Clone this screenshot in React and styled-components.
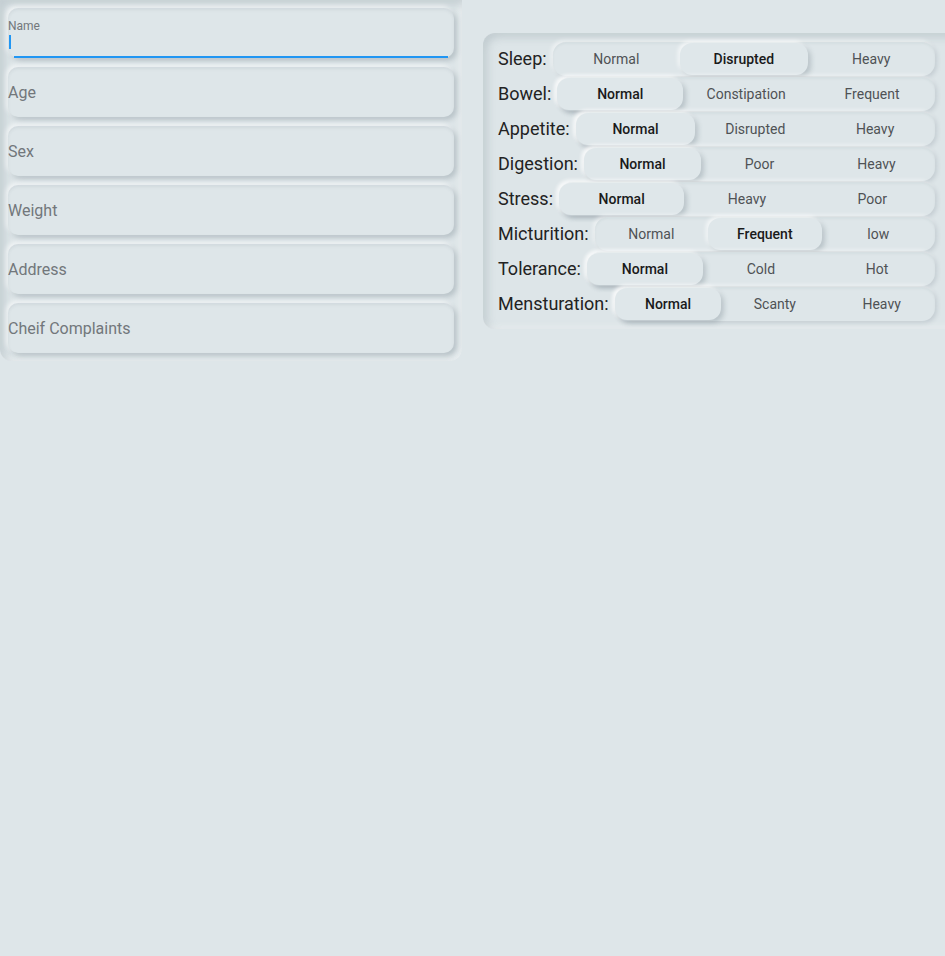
import React from "react";
import styled, { createGlobalStyle } from "styled-components";

const Global = createGlobalStyle`
  html, body { margin: 0; padding: 0; background: #dee6e9; overflow: hidden; }
  body { font-family: Roboto, "Liberation Sans", Arial, sans-serif; }
  * { box-sizing: border-box; }
`;

const Page = styled.div`
  display: flex;
  align-items: flex-start;
  gap: 21px;
  width: 945px;
  height: 956px;
  background: #dee6e9;
`;

const LeftPanel = styled.div`
  flex: 0 0 462px;
  display: flex;
  flex-direction: column;
  gap: 9px;
  padding: 8px;
  border-radius: 0 0 12px 12px;
  background: #dde5e8;
  box-shadow: inset 4px 4px 8px rgba(120, 135, 145, 0.28),
    inset -2px -2px 6px rgba(255, 255, 255, 0.5);
`;

const Field = styled.div`
  position: relative;
  height: 50px;
  border-radius: 10px;
  background: #dee6e9;
  display: flex;
  flex-direction: column;
  justify-content: ${(p) => (p.$focused ? "flex-start" : "center")};
  padding-top: ${(p) => (p.$focused ? "11px" : "0")};
  box-shadow: 3px 3px 5px rgba(110, 125, 135, 0.32),
    -2px -2px 5px rgba(255, 255, 255, 0.65),
    inset 0 2px 3px rgba(120, 135, 145, 0.12);
`;

const Placeholder = styled.span`
  font-size: 16px;
  color: #72777b;
  line-height: 19px;
`;

const SmallLabel = styled.span`
  font-size: 12px;
  line-height: 14px;
  color: #72777b;
`;

const Caret = styled.span`
  display: block;
  width: 2px;
  height: 14px;
  margin-top: 2px;
  margin-left: 1px;
  background: #2196f3;
`;

const Underline = styled.span`
  position: absolute;
  left: 6px;
  right: 6px;
  bottom: 0;
  height: 2px;
  background: #2196f3;
`;

const RightPanel = styled.div`
  flex: 0 0 480px;
  margin-top: 33px;
  display: flex;
  flex-direction: column;
  padding: 8px 10px 8px 15px;
  border-radius: 12px;
  background: #dde5e8;
  box-shadow: inset 4px 4px 8px rgba(120, 135, 145, 0.28),
    inset -2px -2px 6px rgba(255, 255, 255, 0.5);
  width: 480px;
`;

const Row = styled.div`
  display: flex;
  align-items: center;
  gap: 6px;
  height: 35px;
  width: 437px;
`;

const RowLabel = styled.span`
  font-size: 18px;
  color: #222;
  white-space: nowrap;
`;

const Track = styled.div`
  flex: 1;
  display: flex;
  height: 34px;
  padding: 1px 0;
  border-radius: 13px;
  background: #dee6e9;
  box-shadow: 2px 2px 4px rgba(110, 125, 135, 0.22),
    -2px -2px 4px rgba(255, 255, 255, 0.55),
    inset 0 2px 2px rgba(120, 135, 145, 0.08);
`;

const Option = styled.div`
  flex: 1;
  display: flex;
  align-items: center;
  justify-content: center;
  border-radius: 12px;
  font-size: 14px;
  color: ${(p) => (p.$active ? "#1a1a1a" : "#4f5255")};
  font-weight: ${(p) => (p.$active ? 500 : 400)};
  background: ${(p) => (p.$active ? "#dfe7ea" : "transparent")};
  box-shadow: ${(p) =>
    p.$active
      ? "3px 3px 5px rgba(110,125,135,0.32), -2px -2px 4px rgba(255,255,255,0.7)"
      : "none"};
`;

const fields = ["Age", "Sex", "Weight", "Address", "Cheif Complaints"];

const rows = [
  { label: "Sleep:", options: ["Normal", "Disrupted", "Heavy"], active: 1 },
  { label: "Bowel:", options: ["Normal", "Constipation", "Frequent"], active: 0 },
  { label: "Appetite:", options: ["Normal", "Disrupted", "Heavy"], active: 0 },
  { label: "Digestion:", options: ["Normal", "Poor", "Heavy"], active: 0 },
  { label: "Stress:", options: ["Normal", "Heavy", "Poor"], active: 0 },
  { label: "Micturition:", options: ["Normal", "Frequent", "low"], active: 1 },
  { label: "Tolerance:", options: ["Normal", "Cold", "Hot"], active: 0 },
  { label: "Mensturation:", options: ["Normal", "Scanty", "Heavy"], active: 0 },
];

export default function App() {
  return (
    <>
      <Global />
      <Page>
        <LeftPanel>
          <Field $focused>
            <SmallLabel>Name</SmallLabel>
            <Caret />
            <Underline />
          </Field>
          {fields.map((f) => (
            <Field key={f}>
              <Placeholder>{f}</Placeholder>
            </Field>
          ))}
        </LeftPanel>
        <RightPanel>
          {rows.map((r) => (
            <Row key={r.label}>
              <RowLabel>{r.label}</RowLabel>
              <Track>
                {r.options.map((o, i) => (
                  <Option key={o} $active={i === r.active}>
                    {o}
                  </Option>
                ))}
              </Track>
            </Row>
          ))}
        </RightPanel>
      </Page>
    </>
  );
}
